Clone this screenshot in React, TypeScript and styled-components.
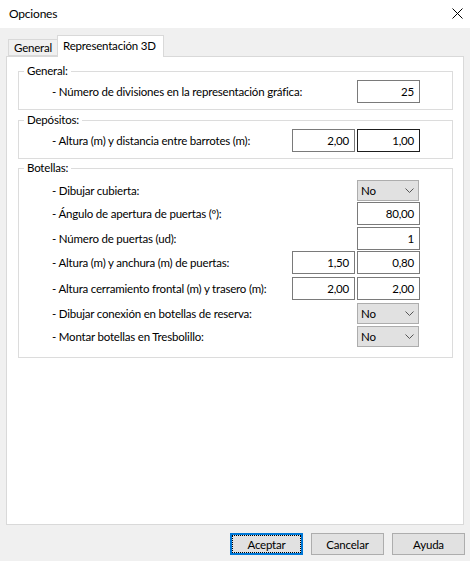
import React from "react";
import styled, { createGlobalStyle } from "styled-components";

const Global = createGlobalStyle`
  html, body { margin: 0; padding: 0; background: #f0f0f0; }
  body {
    font-family: "Segoe UI", Lato, "Noto Sans", sans-serif;
    font-size: 11.5px;
    letter-spacing: -0.2px;
    color: #000;
  }
`;

const Window = styled.div`
  width: 470px;
  height: 561px;
  display: flex;
  flex-direction: column;
  background: #f0f0f0;
  overflow: hidden;
`;

const TitleBar = styled.div`
  height: 28px;
  background: #fff;
  display: flex;
  align-items: center;
  justify-content: space-between;
  padding: 0 8px 2px 9px;
  box-sizing: border-box;
`;

const Title = styled.span`
  font-size: 12px;
`;

const CloseIcon = styled.svg`
  width: 11px;
  height: 11px;
  margin-right: -1px;
`;

const Body = styled.div`
  flex: 1;
  display: flex;
  flex-direction: column;
  padding-top: 7px;
`;

const TabStrip = styled.div`
  display: flex;
  align-items: flex-end;
  padding-left: 8px;
  height: 21px;
  position: relative;
  z-index: 1;
`;

const Tab = styled.div<{ $active?: boolean }>`
  box-sizing: border-box;
  display: flex;
  align-items: center;
  border: 1px solid #d9d9d9;
  background: ${(p) => (p.$active ? "#fff" : "#f0f0f0")};
  height: ${(p) => (p.$active ? "22px" : "17px")};
  margin-bottom: ${(p) => (p.$active ? "-1px" : "0")};
  border-bottom: ${(p) => (p.$active ? "none" : "1px solid #d9d9d9")};
  border-right: ${(p) => (p.$active ? "1px solid #d9d9d9" : "none")};
  padding: ${(p) => (p.$active ? "0 7px 3px 5px" : "0 5px 0 5px")};
  white-space: nowrap;
`;

const Panel = styled.div`
  height: 469px;
  margin: 0 6px;
  box-sizing: border-box;
  border: 1px solid #d9d9d9;
  background: #fff;
  padding: 6px 10px 0 11px;
  display: flex;
  flex-direction: column;
`;

const Group = styled.fieldset<{ $mt: number; $pt: number; $pb: number }>`
  margin: ${(p) => p.$mt}px 0 0 0;
  padding: 0;
  border: 1px solid #dcdcdc;
  min-width: 0;
  & > div {
    padding-top: ${(p) => p.$pt}px;
    padding-bottom: ${(p) => p.$pb}px;
  }
`;

const Legend = styled.legend`
  margin-left: 5px;
  padding: 0 3px;
  line-height: 16px;
`;

const Rows = styled.div`
  display: flex;
  flex-direction: column;
  padding-left: 33px;
  padding-right: 32px;
`;

const Row = styled.div<{ $mt?: number }>`
  display: flex;
  align-items: center;
  justify-content: space-between;
  margin-top: ${(p) => p.$mt ?? 0}px;
`;

const Label = styled.span`
  white-space: nowrap;
  min-width: 0;
`;

const Controls = styled.div`
  display: flex;
  gap: 2px;
  flex-shrink: 0;
`;

const Input = styled.div<{ $dark?: boolean }>`
  box-sizing: border-box;
  width: 63px;
  height: 23px;
  flex-shrink: 0;
  border: 1px solid ${(p) => (p.$dark ? "#1e1e1e" : "#7a7a7a")};
  background: #fff;
  display: flex;
  align-items: center;
  justify-content: flex-end;
  padding-right: 5px;
`;

const Select = styled.div`
  box-sizing: border-box;
  width: 62px;
  height: 21px;
  flex-shrink: 0;
  border: 1px solid #adadad;
  background: #e1e1e1;
  display: flex;
  align-items: center;
  justify-content: space-between;
  padding: 0 4px 0 3px;
  margin-right: 1px;
`;

const Chevron = styled.svg`
  width: 9px;
  height: 5px;
`;

const Footer = styled.div`
  display: flex;
  justify-content: flex-end;
  gap: 8px;
  padding: 8px 5px 0 0;
`;

const Button = styled.div<{ $default?: boolean }>`
  box-sizing: border-box;
  width: 73px;
  height: 22px;
  background: #e1e1e1;
  border: ${(p) => (p.$default ? "2px solid #0078d7" : "1px solid #adadad")};
  display: flex;
  align-items: center;
  justify-content: center;
  padding: ${(p) => (p.$default ? "1px" : "0")};
`;

const Focus = styled.span`
  flex: 1;
  align-self: stretch;
  display: flex;
  align-items: center;
  justify-content: center;
  outline: 1px dotted #000;
`;

const Down = () => (
  <Chevron viewBox="0 0 9 5">
    <polyline points="0.5,0.5 4.5,4.5 8.5,0.5" fill="none" stroke="#555" strokeWidth="1" />
  </Chevron>
);

const Dropdown = ({ value }: { value: string }) => (
  <Select>
    <span>{value}</span>
    <Down />
  </Select>
);

export default function App() {
  return (
    <>
      <Global />
      <Window>
        <TitleBar>
          <Title>Opciones</Title>
          <CloseIcon viewBox="0 0 11 11">
            <path d="M0.5 0.5 L10.5 10.5 M10.5 0.5 L0.5 10.5" stroke="#000" strokeWidth="1" />
          </CloseIcon>
        </TitleBar>
        <Body>
          <TabStrip>
            <Tab>General</Tab>
            <Tab $active>Representación 3D</Tab>
          </TabStrip>
          <Panel>
            <Group $mt={0} $pt={1} $pb={6}>
              <Legend>General:</Legend>
              <Rows>
                <Row>
                  <Label>- Número de divisiones en la representación gráfica:</Label>
                  <Input>25</Input>
                </Row>
              </Rows>
            </Group>
            <Group $mt={2} $pt={1} $pb={6}>
              <Legend>Depósitos:</Legend>
              <Rows>
                <Row>
                  <Label>- Altura (m) y distancia entre barrotes (m):</Label>
                  <Controls>
                    <Input>2,00</Input>
                    <Input $dark>1,00</Input>
                  </Controls>
                </Row>
              </Rows>
            </Group>
            <Group $mt={1} $pt={4} $pb={10}>
              <Legend>Botellas:</Legend>
              <Rows>
                <Row>
                  <Label>- Dibujar cubierta:</Label>
                  <Dropdown value="No" />
                </Row>
                <Row $mt={1}>
                  <Label>- Ángulo de apertura de puertas (º):</Label>
                  <Input>80,00</Input>
                </Row>
                <Row $mt={2}>
                  <Label>- Número de puertas (ud):</Label>
                  <Input>1</Input>
                </Row>
                <Row $mt={1}>
                  <Label>- Altura (m) y anchura (m) de puertas:</Label>
                  <Controls>
                    <Input>1,50</Input>
                    <Input>0,80</Input>
                  </Controls>
                </Row>
                <Row $mt={3}>
                  <Label>- Altura cerramiento frontal (m) y trasero (m):</Label>
                  <Controls>
                    <Input>2,00</Input>
                    <Input>2,00</Input>
                  </Controls>
                </Row>
                <Row $mt={3}>
                  <Label>- Dibujar conexión en botellas de reserva:</Label>
                  <Dropdown value="No" />
                </Row>
                <Row $mt={2}>
                  <Label>- Montar botellas en Tresbolillo:</Label>
                  <Dropdown value="No" />
                </Row>
              </Rows>
            </Group>
          </Panel>
          <Footer>
            <Button $default>
              <Focus>Aceptar</Focus>
            </Button>
            <Button>Cancelar</Button>
            <Button>Ayuda</Button>
          </Footer>
        </Body>
      </Window>
    </>
  );
}
